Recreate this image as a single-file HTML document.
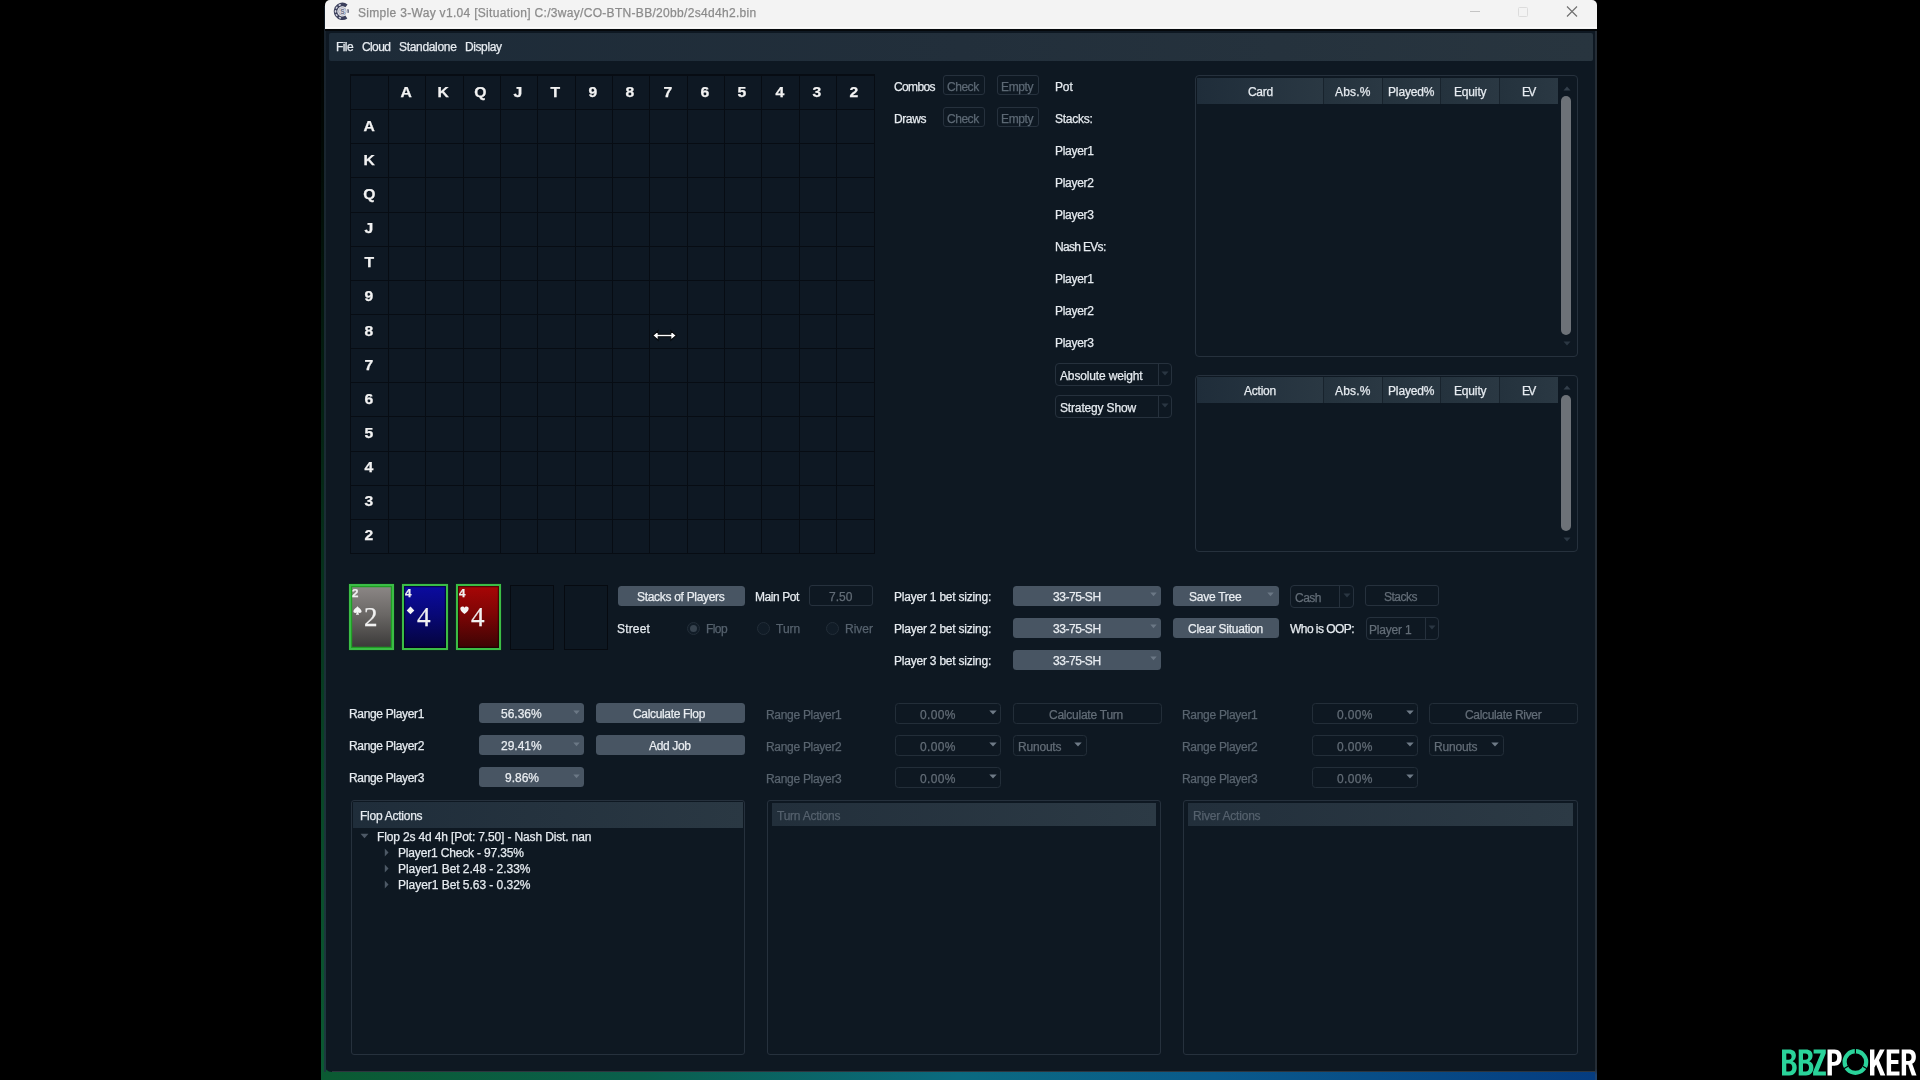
<!DOCTYPE html>
<html><head><meta charset="utf-8"><title>Simple 3-Way</title>
<style>
html,body{margin:0;padding:0;background:#000;}
body{width:1920px;height:1080px;position:relative;overflow:hidden;font-family:"Liberation Sans",sans-serif;font-size:12px;}
body div,body svg{position:absolute;}
.t{white-space:pre;-webkit-text-stroke:0.25px currentColor;will-change:transform;}
</style></head><body>
<div style="left:321px;top:0px;width:1276px;height:1080px;background:linear-gradient(90deg,#0b5a32 0%,#0a5f4c 25%,#0b6a80 50%,#0a5a8c 70%,#053c80 100%);"></div>
<div style="left:321px;top:0px;width:1276px;height:1080px;background:linear-gradient(180deg,rgba(0,0,0,1) 0%,rgba(0,0,0,.93) 12%,rgba(0,0,0,.55) 45%,rgba(0,0,0,.15) 80%,rgba(0,0,0,0) 100%);"></div>
<div style="left:324px;top:6px;width:1273px;height:1066.3px;background:#0e1822;border-radius:0 0 2px 8px;"></div>
<div style="left:323.8px;top:29px;width:2.6px;height:1043px;background:linear-gradient(180deg,#18222c,#1d3a3f);"></div>
<div style="left:1595px;top:29px;width:2px;height:1051px;background:linear-gradient(180deg,#252d36 0,#252d36 1040px,#1f4470 1046px);"></div>
<div style="left:332px;top:1071.3px;width:1263px;height:1.2px;background:rgba(255,255,255,.13);"></div>
<div style="left:325px;top:0px;width:1272px;height:28.5px;background:#f3f3f3;border-radius:5px 5px 0 0;"></div>
<div style="left:325px;top:27.3px;width:1272px;height:1.2px;background:#fbfbfb;"></div>
<div style="left:325px;top:28.5px;width:1272px;height:2px;background:#05080b;"></div>
<svg style="left:332.1px;top:1.1px" width="20.8" height="20.8" viewBox="-10 -10 20 20"><circle r="6.6" fill="none" stroke="#3c405c" stroke-width="3.4" stroke-dasharray="28.8 12.67" transform="rotate(55)"/><ellipse cx="-2.58" cy="-6.08" rx="1.25" ry="0.8" transform="rotate(337 -2.58 -6.08)" fill="#d4d6e2"/><ellipse cx="-5.54" cy="-3.59" rx="1.25" ry="0.8" transform="rotate(303 -5.54 -3.59)" fill="#d4d6e2"/><ellipse cx="-6.60" cy="0.00" rx="1.25" ry="0.8" transform="rotate(270 -6.60 0.00)" fill="#d4d6e2"/><ellipse cx="-5.54" cy="3.59" rx="1.25" ry="0.8" transform="rotate(237 -5.54 3.59)" fill="#d4d6e2"/><ellipse cx="-2.37" cy="6.16" rx="1.25" ry="0.8" transform="rotate(201 -2.37 6.16)" fill="#d4d6e2"/><path d="M5.200 -2.100A5.600 5.600 0 0 1 5.400 1.400" fill="none" stroke="#3c405c" stroke-width="1.100"/><circle r="3.7" fill="#dcdde5" stroke="#9a9db0" stroke-width="0.7"/><text x="0" y="2.3" font-size="6.4" font-weight="bold" fill="#6d7188" text-anchor="middle" font-family="Liberation Sans">S</text></svg>
<div class="t" style="left:357.50px;top:4.60px;height:16px;line-height:16px;font-size:12px;color:#8b8b8b;white-space:pre;letter-spacing:0.309px;">Simple 3-Way v1.04 [Situation] C:/3way/CO-BTN-BB/20bb/2s4d4h2.bin</div>
<svg style="left:1460px;top:0" width="130" height="26" viewBox="0 0 130 26"><path d="M10 11.5h10" stroke="#c4c4c4" stroke-width="1"/><rect x="58.5" y="7.5" width="9" height="9" rx="1" fill="none" stroke="#dcdcdc" stroke-width="1"/><path d="M107 6.5l10 10M117 6.5l-10 10" stroke="#6f6f6f" stroke-width="1.1"/></svg>
<div style="left:329px;top:32.5px;width:1264px;height:28px;background:linear-gradient(90deg,#1d2b38 0%,#222f3b 50%,#28353f 100%);border-radius:2px;"></div>
<div class="t" style="left:335.80px;top:38.60px;height:16px;line-height:16px;font-size:12px;color:#e6ebf0;white-space:pre;letter-spacing:-0.584px;">File</div>
<div class="t" style="left:361.70px;top:38.60px;height:16px;line-height:16px;font-size:12px;color:#e6ebf0;white-space:pre;letter-spacing:-0.611px;">Cloud</div>
<div class="t" style="left:398.70px;top:38.60px;height:16px;line-height:16px;font-size:12px;color:#e6ebf0;white-space:pre;letter-spacing:-0.322px;">Standalone</div>
<div class="t" style="left:464.70px;top:38.60px;height:16px;line-height:16px;font-size:12px;color:#e6ebf0;white-space:pre;letter-spacing:-0.407px;">Display</div>
<div style="left:349.5px;top:74px;width:525.0px;height:480.0px;background:#070c13;"></div><div style="left:351px;top:76px;width:37px;height:33px;background:#0e1823;"></div><div style="left:389px;top:76px;width:36px;height:33px;background:#0e1823;"></div><div style="left:426px;top:76px;width:37px;height:33px;background:#0e1823;"></div><div style="left:464px;top:76px;width:36px;height:33px;background:#0e1823;"></div><div style="left:501px;top:76px;width:36px;height:33px;background:#0e1823;"></div><div style="left:538px;top:76px;width:37px;height:33px;background:#0e1823;"></div><div style="left:576px;top:76px;width:36px;height:33px;background:#0e1823;"></div><div style="left:613px;top:76px;width:36px;height:33px;background:#0e1823;"></div><div style="left:650px;top:76px;width:37px;height:33px;background:#0e1823;"></div><div style="left:688px;top:76px;width:36px;height:33px;background:#0e1823;"></div><div style="left:725px;top:76px;width:36px;height:33px;background:#0e1823;"></div><div style="left:762px;top:76px;width:37px;height:33px;background:#0e1823;"></div><div style="left:800px;top:76px;width:36px;height:33px;background:#0e1823;"></div><div style="left:837px;top:76px;width:37px;height:33px;background:#0e1823;"></div><div style="left:351px;top:110px;width:37px;height:33px;background:#0e1823;"></div><div style="left:389px;top:110px;width:36px;height:33px;background:#0e1823;"></div><div style="left:426px;top:110px;width:37px;height:33px;background:#0e1823;"></div><div style="left:464px;top:110px;width:36px;height:33px;background:#0e1823;"></div><div style="left:501px;top:110px;width:36px;height:33px;background:#0e1823;"></div><div style="left:538px;top:110px;width:37px;height:33px;background:#0e1823;"></div><div style="left:576px;top:110px;width:36px;height:33px;background:#0e1823;"></div><div style="left:613px;top:110px;width:36px;height:33px;background:#0e1823;"></div><div style="left:650px;top:110px;width:37px;height:33px;background:#0e1823;"></div><div style="left:688px;top:110px;width:36px;height:33px;background:#0e1823;"></div><div style="left:725px;top:110px;width:36px;height:33px;background:#0e1823;"></div><div style="left:762px;top:110px;width:37px;height:33px;background:#0e1823;"></div><div style="left:800px;top:110px;width:36px;height:33px;background:#0e1823;"></div><div style="left:837px;top:110px;width:37px;height:33px;background:#0e1823;"></div><div style="left:351px;top:144px;width:37px;height:33px;background:#0e1823;"></div><div style="left:389px;top:144px;width:36px;height:33px;background:#0e1823;"></div><div style="left:426px;top:144px;width:37px;height:33px;background:#0e1823;"></div><div style="left:464px;top:144px;width:36px;height:33px;background:#0e1823;"></div><div style="left:501px;top:144px;width:36px;height:33px;background:#0e1823;"></div><div style="left:538px;top:144px;width:37px;height:33px;background:#0e1823;"></div><div style="left:576px;top:144px;width:36px;height:33px;background:#0e1823;"></div><div style="left:613px;top:144px;width:36px;height:33px;background:#0e1823;"></div><div style="left:650px;top:144px;width:37px;height:33px;background:#0e1823;"></div><div style="left:688px;top:144px;width:36px;height:33px;background:#0e1823;"></div><div style="left:725px;top:144px;width:36px;height:33px;background:#0e1823;"></div><div style="left:762px;top:144px;width:37px;height:33px;background:#0e1823;"></div><div style="left:800px;top:144px;width:36px;height:33px;background:#0e1823;"></div><div style="left:837px;top:144px;width:37px;height:33px;background:#0e1823;"></div><div style="left:351px;top:178px;width:37px;height:34px;background:#0e1823;"></div><div style="left:389px;top:178px;width:36px;height:34px;background:#0e1823;"></div><div style="left:426px;top:178px;width:37px;height:34px;background:#0e1823;"></div><div style="left:464px;top:178px;width:36px;height:34px;background:#0e1823;"></div><div style="left:501px;top:178px;width:36px;height:34px;background:#0e1823;"></div><div style="left:538px;top:178px;width:37px;height:34px;background:#0e1823;"></div><div style="left:576px;top:178px;width:36px;height:34px;background:#0e1823;"></div><div style="left:613px;top:178px;width:36px;height:34px;background:#0e1823;"></div><div style="left:650px;top:178px;width:37px;height:34px;background:#0e1823;"></div><div style="left:688px;top:178px;width:36px;height:34px;background:#0e1823;"></div><div style="left:725px;top:178px;width:36px;height:34px;background:#0e1823;"></div><div style="left:762px;top:178px;width:37px;height:34px;background:#0e1823;"></div><div style="left:800px;top:178px;width:36px;height:34px;background:#0e1823;"></div><div style="left:837px;top:178px;width:37px;height:34px;background:#0e1823;"></div><div style="left:351px;top:213px;width:37px;height:33px;background:#0e1823;"></div><div style="left:389px;top:213px;width:36px;height:33px;background:#0e1823;"></div><div style="left:426px;top:213px;width:37px;height:33px;background:#0e1823;"></div><div style="left:464px;top:213px;width:36px;height:33px;background:#0e1823;"></div><div style="left:501px;top:213px;width:36px;height:33px;background:#0e1823;"></div><div style="left:538px;top:213px;width:37px;height:33px;background:#0e1823;"></div><div style="left:576px;top:213px;width:36px;height:33px;background:#0e1823;"></div><div style="left:613px;top:213px;width:36px;height:33px;background:#0e1823;"></div><div style="left:650px;top:213px;width:37px;height:33px;background:#0e1823;"></div><div style="left:688px;top:213px;width:36px;height:33px;background:#0e1823;"></div><div style="left:725px;top:213px;width:36px;height:33px;background:#0e1823;"></div><div style="left:762px;top:213px;width:37px;height:33px;background:#0e1823;"></div><div style="left:800px;top:213px;width:36px;height:33px;background:#0e1823;"></div><div style="left:837px;top:213px;width:37px;height:33px;background:#0e1823;"></div><div style="left:351px;top:247px;width:37px;height:33px;background:#0e1823;"></div><div style="left:389px;top:247px;width:36px;height:33px;background:#0e1823;"></div><div style="left:426px;top:247px;width:37px;height:33px;background:#0e1823;"></div><div style="left:464px;top:247px;width:36px;height:33px;background:#0e1823;"></div><div style="left:501px;top:247px;width:36px;height:33px;background:#0e1823;"></div><div style="left:538px;top:247px;width:37px;height:33px;background:#0e1823;"></div><div style="left:576px;top:247px;width:36px;height:33px;background:#0e1823;"></div><div style="left:613px;top:247px;width:36px;height:33px;background:#0e1823;"></div><div style="left:650px;top:247px;width:37px;height:33px;background:#0e1823;"></div><div style="left:688px;top:247px;width:36px;height:33px;background:#0e1823;"></div><div style="left:725px;top:247px;width:36px;height:33px;background:#0e1823;"></div><div style="left:762px;top:247px;width:37px;height:33px;background:#0e1823;"></div><div style="left:800px;top:247px;width:36px;height:33px;background:#0e1823;"></div><div style="left:837px;top:247px;width:37px;height:33px;background:#0e1823;"></div><div style="left:351px;top:281px;width:37px;height:33px;background:#0e1823;"></div><div style="left:389px;top:281px;width:36px;height:33px;background:#0e1823;"></div><div style="left:426px;top:281px;width:37px;height:33px;background:#0e1823;"></div><div style="left:464px;top:281px;width:36px;height:33px;background:#0e1823;"></div><div style="left:501px;top:281px;width:36px;height:33px;background:#0e1823;"></div><div style="left:538px;top:281px;width:37px;height:33px;background:#0e1823;"></div><div style="left:576px;top:281px;width:36px;height:33px;background:#0e1823;"></div><div style="left:613px;top:281px;width:36px;height:33px;background:#0e1823;"></div><div style="left:650px;top:281px;width:37px;height:33px;background:#0e1823;"></div><div style="left:688px;top:281px;width:36px;height:33px;background:#0e1823;"></div><div style="left:725px;top:281px;width:36px;height:33px;background:#0e1823;"></div><div style="left:762px;top:281px;width:37px;height:33px;background:#0e1823;"></div><div style="left:800px;top:281px;width:36px;height:33px;background:#0e1823;"></div><div style="left:837px;top:281px;width:37px;height:33px;background:#0e1823;"></div><div style="left:351px;top:315px;width:37px;height:33px;background:#0e1823;"></div><div style="left:389px;top:315px;width:36px;height:33px;background:#0e1823;"></div><div style="left:426px;top:315px;width:37px;height:33px;background:#0e1823;"></div><div style="left:464px;top:315px;width:36px;height:33px;background:#0e1823;"></div><div style="left:501px;top:315px;width:36px;height:33px;background:#0e1823;"></div><div style="left:538px;top:315px;width:37px;height:33px;background:#0e1823;"></div><div style="left:576px;top:315px;width:36px;height:33px;background:#0e1823;"></div><div style="left:613px;top:315px;width:36px;height:33px;background:#0e1823;"></div><div style="left:650px;top:315px;width:37px;height:33px;background:#0e1823;"></div><div style="left:688px;top:315px;width:36px;height:33px;background:#0e1823;"></div><div style="left:725px;top:315px;width:36px;height:33px;background:#0e1823;"></div><div style="left:762px;top:315px;width:37px;height:33px;background:#0e1823;"></div><div style="left:800px;top:315px;width:36px;height:33px;background:#0e1823;"></div><div style="left:837px;top:315px;width:37px;height:33px;background:#0e1823;"></div><div style="left:351px;top:349px;width:37px;height:33px;background:#0e1823;"></div><div style="left:389px;top:349px;width:36px;height:33px;background:#0e1823;"></div><div style="left:426px;top:349px;width:37px;height:33px;background:#0e1823;"></div><div style="left:464px;top:349px;width:36px;height:33px;background:#0e1823;"></div><div style="left:501px;top:349px;width:36px;height:33px;background:#0e1823;"></div><div style="left:538px;top:349px;width:37px;height:33px;background:#0e1823;"></div><div style="left:576px;top:349px;width:36px;height:33px;background:#0e1823;"></div><div style="left:613px;top:349px;width:36px;height:33px;background:#0e1823;"></div><div style="left:650px;top:349px;width:37px;height:33px;background:#0e1823;"></div><div style="left:688px;top:349px;width:36px;height:33px;background:#0e1823;"></div><div style="left:725px;top:349px;width:36px;height:33px;background:#0e1823;"></div><div style="left:762px;top:349px;width:37px;height:33px;background:#0e1823;"></div><div style="left:800px;top:349px;width:36px;height:33px;background:#0e1823;"></div><div style="left:837px;top:349px;width:37px;height:33px;background:#0e1823;"></div><div style="left:351px;top:383px;width:37px;height:33px;background:#0e1823;"></div><div style="left:389px;top:383px;width:36px;height:33px;background:#0e1823;"></div><div style="left:426px;top:383px;width:37px;height:33px;background:#0e1823;"></div><div style="left:464px;top:383px;width:36px;height:33px;background:#0e1823;"></div><div style="left:501px;top:383px;width:36px;height:33px;background:#0e1823;"></div><div style="left:538px;top:383px;width:37px;height:33px;background:#0e1823;"></div><div style="left:576px;top:383px;width:36px;height:33px;background:#0e1823;"></div><div style="left:613px;top:383px;width:36px;height:33px;background:#0e1823;"></div><div style="left:650px;top:383px;width:37px;height:33px;background:#0e1823;"></div><div style="left:688px;top:383px;width:36px;height:33px;background:#0e1823;"></div><div style="left:725px;top:383px;width:36px;height:33px;background:#0e1823;"></div><div style="left:762px;top:383px;width:37px;height:33px;background:#0e1823;"></div><div style="left:800px;top:383px;width:36px;height:33px;background:#0e1823;"></div><div style="left:837px;top:383px;width:37px;height:33px;background:#0e1823;"></div><div style="left:351px;top:417px;width:37px;height:34px;background:#0e1823;"></div><div style="left:389px;top:417px;width:36px;height:34px;background:#0e1823;"></div><div style="left:426px;top:417px;width:37px;height:34px;background:#0e1823;"></div><div style="left:464px;top:417px;width:36px;height:34px;background:#0e1823;"></div><div style="left:501px;top:417px;width:36px;height:34px;background:#0e1823;"></div><div style="left:538px;top:417px;width:37px;height:34px;background:#0e1823;"></div><div style="left:576px;top:417px;width:36px;height:34px;background:#0e1823;"></div><div style="left:613px;top:417px;width:36px;height:34px;background:#0e1823;"></div><div style="left:650px;top:417px;width:37px;height:34px;background:#0e1823;"></div><div style="left:688px;top:417px;width:36px;height:34px;background:#0e1823;"></div><div style="left:725px;top:417px;width:36px;height:34px;background:#0e1823;"></div><div style="left:762px;top:417px;width:37px;height:34px;background:#0e1823;"></div><div style="left:800px;top:417px;width:36px;height:34px;background:#0e1823;"></div><div style="left:837px;top:417px;width:37px;height:34px;background:#0e1823;"></div><div style="left:351px;top:452px;width:37px;height:33px;background:#0e1823;"></div><div style="left:389px;top:452px;width:36px;height:33px;background:#0e1823;"></div><div style="left:426px;top:452px;width:37px;height:33px;background:#0e1823;"></div><div style="left:464px;top:452px;width:36px;height:33px;background:#0e1823;"></div><div style="left:501px;top:452px;width:36px;height:33px;background:#0e1823;"></div><div style="left:538px;top:452px;width:37px;height:33px;background:#0e1823;"></div><div style="left:576px;top:452px;width:36px;height:33px;background:#0e1823;"></div><div style="left:613px;top:452px;width:36px;height:33px;background:#0e1823;"></div><div style="left:650px;top:452px;width:37px;height:33px;background:#0e1823;"></div><div style="left:688px;top:452px;width:36px;height:33px;background:#0e1823;"></div><div style="left:725px;top:452px;width:36px;height:33px;background:#0e1823;"></div><div style="left:762px;top:452px;width:37px;height:33px;background:#0e1823;"></div><div style="left:800px;top:452px;width:36px;height:33px;background:#0e1823;"></div><div style="left:837px;top:452px;width:37px;height:33px;background:#0e1823;"></div><div style="left:351px;top:486px;width:37px;height:33px;background:#0e1823;"></div><div style="left:389px;top:486px;width:36px;height:33px;background:#0e1823;"></div><div style="left:426px;top:486px;width:37px;height:33px;background:#0e1823;"></div><div style="left:464px;top:486px;width:36px;height:33px;background:#0e1823;"></div><div style="left:501px;top:486px;width:36px;height:33px;background:#0e1823;"></div><div style="left:538px;top:486px;width:37px;height:33px;background:#0e1823;"></div><div style="left:576px;top:486px;width:36px;height:33px;background:#0e1823;"></div><div style="left:613px;top:486px;width:36px;height:33px;background:#0e1823;"></div><div style="left:650px;top:486px;width:37px;height:33px;background:#0e1823;"></div><div style="left:688px;top:486px;width:36px;height:33px;background:#0e1823;"></div><div style="left:725px;top:486px;width:36px;height:33px;background:#0e1823;"></div><div style="left:762px;top:486px;width:37px;height:33px;background:#0e1823;"></div><div style="left:800px;top:486px;width:36px;height:33px;background:#0e1823;"></div><div style="left:837px;top:486px;width:37px;height:33px;background:#0e1823;"></div><div style="left:351px;top:520px;width:37px;height:33px;background:#0e1823;"></div><div style="left:389px;top:520px;width:36px;height:33px;background:#0e1823;"></div><div style="left:426px;top:520px;width:37px;height:33px;background:#0e1823;"></div><div style="left:464px;top:520px;width:36px;height:33px;background:#0e1823;"></div><div style="left:501px;top:520px;width:36px;height:33px;background:#0e1823;"></div><div style="left:538px;top:520px;width:37px;height:33px;background:#0e1823;"></div><div style="left:576px;top:520px;width:36px;height:33px;background:#0e1823;"></div><div style="left:613px;top:520px;width:36px;height:33px;background:#0e1823;"></div><div style="left:650px;top:520px;width:37px;height:33px;background:#0e1823;"></div><div style="left:688px;top:520px;width:36px;height:33px;background:#0e1823;"></div><div style="left:725px;top:520px;width:36px;height:33px;background:#0e1823;"></div><div style="left:762px;top:520px;width:37px;height:33px;background:#0e1823;"></div><div style="left:800px;top:520px;width:36px;height:33px;background:#0e1823;"></div><div style="left:837px;top:520px;width:37px;height:33px;background:#0e1823;"></div>
<div class="t" style="left:400.88px;top:83.47px;height:18px;line-height:18px;font-size:14px;color:#f2f2f2;white-space:pre;font-weight:bold;transform:scaleX(1.12);">A</div>
<div class="t" style="left:364.22px;top:116.71px;height:18px;line-height:18px;font-size:14px;color:#f2f2f2;white-space:pre;font-weight:bold;transform:scaleX(1.12);">A</div>
<div class="t" style="left:438.24px;top:83.47px;height:18px;line-height:18px;font-size:14px;color:#f2f2f2;white-space:pre;font-weight:bold;transform:scaleX(1.12);">K</div>
<div class="t" style="left:364.22px;top:150.85px;height:18px;line-height:18px;font-size:14px;color:#f2f2f2;white-space:pre;font-weight:bold;transform:scaleX(1.12);">K</div>
<div class="t" style="left:475.22px;top:83.47px;height:18px;line-height:18px;font-size:14px;color:#f2f2f2;white-space:pre;font-weight:bold;transform:scaleX(1.12);">Q</div>
<div class="t" style="left:363.84px;top:184.99px;height:18px;line-height:18px;font-size:14px;color:#f2f2f2;white-space:pre;font-weight:bold;transform:scaleX(1.12);">Q</div>
<div class="t" style="left:514.13px;top:83.47px;height:18px;line-height:18px;font-size:14px;color:#f2f2f2;white-space:pre;font-weight:bold;transform:scaleX(1.12);">J</div>
<div class="t" style="left:365.39px;top:219.13px;height:18px;line-height:18px;font-size:14px;color:#f2f2f2;white-space:pre;font-weight:bold;transform:scaleX(1.12);">J</div>
<div class="t" style="left:551.10px;top:83.47px;height:18px;line-height:18px;font-size:14px;color:#f2f2f2;white-space:pre;font-weight:bold;transform:scaleX(1.12);">T</div>
<div class="t" style="left:365.00px;top:253.27px;height:18px;line-height:18px;font-size:14px;color:#f2f2f2;white-space:pre;font-weight:bold;transform:scaleX(1.12);">T</div>
<div class="t" style="left:588.85px;top:83.47px;height:18px;line-height:18px;font-size:14px;color:#f2f2f2;white-space:pre;font-weight:bold;transform:scaleX(1.12);">9</div>
<div class="t" style="left:365.39px;top:287.41px;height:18px;line-height:18px;font-size:14px;color:#f2f2f2;white-space:pre;font-weight:bold;transform:scaleX(1.12);">9</div>
<div class="t" style="left:626.21px;top:83.47px;height:18px;line-height:18px;font-size:14px;color:#f2f2f2;white-space:pre;font-weight:bold;transform:scaleX(1.12);">8</div>
<div class="t" style="left:365.39px;top:321.55px;height:18px;line-height:18px;font-size:14px;color:#f2f2f2;white-space:pre;font-weight:bold;transform:scaleX(1.12);">8</div>
<div class="t" style="left:663.57px;top:83.47px;height:18px;line-height:18px;font-size:14px;color:#f2f2f2;white-space:pre;font-weight:bold;transform:scaleX(1.12);">7</div>
<div class="t" style="left:365.39px;top:355.69px;height:18px;line-height:18px;font-size:14px;color:#f2f2f2;white-space:pre;font-weight:bold;transform:scaleX(1.12);">7</div>
<div class="t" style="left:700.93px;top:83.47px;height:18px;line-height:18px;font-size:14px;color:#f2f2f2;white-space:pre;font-weight:bold;transform:scaleX(1.12);">6</div>
<div class="t" style="left:365.39px;top:389.83px;height:18px;line-height:18px;font-size:14px;color:#f2f2f2;white-space:pre;font-weight:bold;transform:scaleX(1.12);">6</div>
<div class="t" style="left:738.29px;top:83.47px;height:18px;line-height:18px;font-size:14px;color:#f2f2f2;white-space:pre;font-weight:bold;transform:scaleX(1.12);">5</div>
<div class="t" style="left:365.39px;top:423.97px;height:18px;line-height:18px;font-size:14px;color:#f2f2f2;white-space:pre;font-weight:bold;transform:scaleX(1.12);">5</div>
<div class="t" style="left:775.65px;top:83.47px;height:18px;line-height:18px;font-size:14px;color:#f2f2f2;white-space:pre;font-weight:bold;transform:scaleX(1.12);">4</div>
<div class="t" style="left:365.39px;top:458.11px;height:18px;line-height:18px;font-size:14px;color:#f2f2f2;white-space:pre;font-weight:bold;transform:scaleX(1.12);">4</div>
<div class="t" style="left:813.01px;top:83.47px;height:18px;line-height:18px;font-size:14px;color:#f2f2f2;white-space:pre;font-weight:bold;transform:scaleX(1.12);">3</div>
<div class="t" style="left:365.39px;top:492.25px;height:18px;line-height:18px;font-size:14px;color:#f2f2f2;white-space:pre;font-weight:bold;transform:scaleX(1.12);">3</div>
<div class="t" style="left:850.37px;top:83.47px;height:18px;line-height:18px;font-size:14px;color:#f2f2f2;white-space:pre;font-weight:bold;transform:scaleX(1.12);">2</div>
<div class="t" style="left:365.39px;top:526.39px;height:18px;line-height:18px;font-size:14px;color:#f2f2f2;white-space:pre;font-weight:bold;transform:scaleX(1.12);">2</div>
<svg style="left:650px;top:327px" width="30" height="16" viewBox="0 0 30 16"><path d="M2.700 8.500l5.500-4.700v3.500h12.600v-3.500l5.500 4.700-5.500 4.700v-3.500h-12.600v3.500z" fill="#fff" stroke="#05080c" stroke-width="1.100" stroke-linejoin="miter"/></svg>
<div class="t" style="left:894.20px;top:78.50px;height:16px;line-height:16px;font-size:12px;color:#e6ebf0;white-space:pre;letter-spacing:-0.647px;">Combos</div>
<div class="t" style="left:894.20px;top:110.50px;height:16px;line-height:16px;font-size:12px;color:#e6ebf0;white-space:pre;letter-spacing:-0.400px;">Draws</div>
<div style="left:943.3px;top:74.7px;width:42px;height:20.8px;border:1px solid #26313d;border-radius:3px;box-sizing:border-box;"></div>
<div class="t" style="left:947.45px;top:78.70px;height:16px;line-height:16px;font-size:12px;color:#5c6874;white-space:pre;letter-spacing:-0.463px;">Check</div>
<div style="left:996.7px;top:74.7px;width:42px;height:20.8px;border:1px solid #26313d;border-radius:3px;box-sizing:border-box;"></div>
<div class="t" style="left:1000.60px;top:78.70px;height:16px;line-height:16px;font-size:12px;color:#5c6874;white-space:pre;letter-spacing:-0.362px;">Empty</div>
<div style="left:943.3px;top:106.7px;width:42px;height:20.8px;border:1px solid #26313d;border-radius:3px;box-sizing:border-box;"></div>
<div class="t" style="left:947.45px;top:110.70px;height:16px;line-height:16px;font-size:12px;color:#5c6874;white-space:pre;letter-spacing:-0.463px;">Check</div>
<div style="left:996.7px;top:106.7px;width:42px;height:20.8px;border:1px solid #26313d;border-radius:3px;box-sizing:border-box;"></div>
<div class="t" style="left:1000.60px;top:110.70px;height:16px;line-height:16px;font-size:12px;color:#5c6874;white-space:pre;letter-spacing:-0.362px;">Empty</div>
<div class="t" style="left:1054.50px;top:78.60px;height:16px;line-height:16px;font-size:12px;color:#e6ebf0;white-space:pre;letter-spacing:-0.137px;">Pot</div>
<div class="t" style="left:1054.50px;top:110.60px;height:16px;line-height:16px;font-size:12px;color:#e6ebf0;white-space:pre;letter-spacing:-0.264px;">Stacks:</div>
<div class="t" style="left:1054.50px;top:142.60px;height:16px;line-height:16px;font-size:12px;color:#e6ebf0;white-space:pre;letter-spacing:-0.298px;">Player1</div>
<div class="t" style="left:1054.50px;top:174.60px;height:16px;line-height:16px;font-size:12px;color:#e6ebf0;white-space:pre;letter-spacing:-0.298px;">Player2</div>
<div class="t" style="left:1054.50px;top:206.60px;height:16px;line-height:16px;font-size:12px;color:#e6ebf0;white-space:pre;letter-spacing:-0.298px;">Player3</div>
<div class="t" style="left:1054.50px;top:238.60px;height:16px;line-height:16px;font-size:12px;color:#e6ebf0;white-space:pre;letter-spacing:-0.677px;">Nash EVs:</div>
<div class="t" style="left:1054.50px;top:270.60px;height:16px;line-height:16px;font-size:12px;color:#e6ebf0;white-space:pre;letter-spacing:-0.298px;">Player1</div>
<div class="t" style="left:1054.50px;top:302.60px;height:16px;line-height:16px;font-size:12px;color:#e6ebf0;white-space:pre;letter-spacing:-0.298px;">Player2</div>
<div class="t" style="left:1054.50px;top:334.60px;height:16px;line-height:16px;font-size:12px;color:#e6ebf0;white-space:pre;letter-spacing:-0.298px;">Player3</div>
<div style="left:1055.3px;top:363px;width:117.2px;height:22.8px;border:1px solid #26313d;border-radius:4px;box-sizing:border-box;"></div>
<div style="left:1157.7px;top:364px;width:1px;height:20.8px;background:#26313d;"></div>
<div class="t" style="left:1060.30px;top:368.00px;height:16px;line-height:16px;font-size:12px;color:#e6ebf0;white-space:pre;letter-spacing:-0.148px;">Absolute weight</div>
<svg style="left:1161.1px;top:370.9px" width="8" height="5" viewBox="0 0 8 5"><path d="M0.5 0.5h7L4 4.5z" fill="#2a3642"/></svg>
<div style="left:1055.3px;top:395px;width:117.2px;height:22.8px;border:1px solid #26313d;border-radius:4px;box-sizing:border-box;"></div>
<div style="left:1157.7px;top:396px;width:1px;height:20.8px;background:#26313d;"></div>
<div class="t" style="left:1060.30px;top:400.00px;height:16px;line-height:16px;font-size:12px;color:#e6ebf0;white-space:pre;letter-spacing:-0.157px;">Strategy Show</div>
<svg style="left:1161.1px;top:402.9px" width="8" height="5" viewBox="0 0 8 5"><path d="M0.5 0.5h7L4 4.5z" fill="#2a3642"/></svg>
<div style="left:1194.7px;top:74.8px;width:383.3px;height:282px;border:1px solid #26313d;border-radius:4px;box-sizing:border-box;"></div>
<div style="left:1197px;top:77.5px;width:361.4px;height:26.3px;background:#26343f;"></div>
<div style="left:1197px;top:77.5px;width:126.3px;height:26.3px;background:linear-gradient(90deg,#1f2d3a,#2a3843);"></div>
<div class="t" style="left:1247.85px;top:83.55px;height:16px;line-height:16px;font-size:12px;color:#e6ebf0;white-space:pre;letter-spacing:-0.303px;">Card</div>
<div style="left:1323.3px;top:77.5px;width:58.7px;height:26.3px;background:linear-gradient(90deg,#24323d,#2a3843);"></div>
<div style="left:1322.8px;top:77.5px;width:1px;height:26.3px;background:#18232d;"></div>
<div class="t" style="left:1334.95px;top:83.55px;height:16px;line-height:16px;font-size:12px;color:#e6ebf0;white-space:pre;letter-spacing:0.184px;">Abs.%</div>
<div style="left:1382px;top:77.5px;width:58.3px;height:26.3px;background:linear-gradient(90deg,#24323d,#2a3843);"></div>
<div style="left:1381.5px;top:77.5px;width:1px;height:26.3px;background:#18232d;"></div>
<div class="t" style="left:1388.05px;top:83.55px;height:16px;line-height:16px;font-size:12px;color:#e6ebf0;white-space:pre;letter-spacing:-0.137px;">Played%</div>
<div style="left:1440.3px;top:77.5px;width:59.1px;height:26.3px;background:linear-gradient(90deg,#24323d,#2a3843);"></div>
<div style="left:1439.8px;top:77.5px;width:1px;height:26.3px;background:#18232d;"></div>
<div class="t" style="left:1453.75px;top:83.55px;height:16px;line-height:16px;font-size:12px;color:#e6ebf0;white-space:pre;letter-spacing:-0.159px;">Equity</div>
<div style="left:1499.4px;top:77.5px;width:59px;height:26.3px;background:linear-gradient(90deg,#24323d,#2a3843);"></div>
<div style="left:1498.9px;top:77.5px;width:1px;height:26.3px;background:#18232d;"></div>
<div class="t" style="left:1522.20px;top:83.55px;height:16px;line-height:16px;font-size:12px;color:#e6ebf0;white-space:pre;letter-spacing:-1.704px;">EV</div>
<div style="left:1561.4px;top:96px;width:10px;height:239px;background:#6d7278;border-radius:5px;"></div>
<svg style="left:1562.5px;top:86.0px" width="8" height="5" viewBox="0 0 8 5"><path d="M0.5 4.5h7L4 0.5z" fill="#333f4b"/></svg>
<svg style="left:1562.5px;top:341.0px" width="8" height="5" viewBox="0 0 8 5"><path d="M0.5 0.5h7L4 4.5z" fill="#2b3743"/></svg>
<div style="left:1194.7px;top:374.7px;width:383.3px;height:177.5px;border:1px solid #26313d;border-radius:4px;box-sizing:border-box;"></div>
<div style="left:1197px;top:376.7px;width:361.4px;height:26.3px;background:#26343f;"></div>
<div style="left:1197px;top:376.7px;width:126.3px;height:26.3px;background:linear-gradient(90deg,#1f2d3a,#2a3843);"></div>
<div class="t" style="left:1244.25px;top:383.45px;height:16px;line-height:16px;font-size:12px;color:#e6ebf0;white-space:pre;letter-spacing:-0.225px;">Action</div>
<div style="left:1323.3px;top:376.7px;width:58.7px;height:26.3px;background:linear-gradient(90deg,#24323d,#2a3843);"></div>
<div style="left:1322.8px;top:376.7px;width:1px;height:26.3px;background:#18232d;"></div>
<div class="t" style="left:1334.95px;top:383.45px;height:16px;line-height:16px;font-size:12px;color:#e6ebf0;white-space:pre;letter-spacing:0.184px;">Abs.%</div>
<div style="left:1382px;top:376.7px;width:58.3px;height:26.3px;background:linear-gradient(90deg,#24323d,#2a3843);"></div>
<div style="left:1381.5px;top:376.7px;width:1px;height:26.3px;background:#18232d;"></div>
<div class="t" style="left:1388.05px;top:383.45px;height:16px;line-height:16px;font-size:12px;color:#e6ebf0;white-space:pre;letter-spacing:-0.137px;">Played%</div>
<div style="left:1440.3px;top:376.7px;width:59.1px;height:26.3px;background:linear-gradient(90deg,#24323d,#2a3843);"></div>
<div style="left:1439.8px;top:376.7px;width:1px;height:26.3px;background:#18232d;"></div>
<div class="t" style="left:1453.75px;top:383.45px;height:16px;line-height:16px;font-size:12px;color:#e6ebf0;white-space:pre;letter-spacing:-0.159px;">Equity</div>
<div style="left:1499.4px;top:376.7px;width:59px;height:26.3px;background:linear-gradient(90deg,#24323d,#2a3843);"></div>
<div style="left:1498.9px;top:376.7px;width:1px;height:26.3px;background:#18232d;"></div>
<div class="t" style="left:1522.20px;top:383.45px;height:16px;line-height:16px;font-size:12px;color:#e6ebf0;white-space:pre;letter-spacing:-1.704px;">EV</div>
<div style="left:1561.4px;top:394.6px;width:10px;height:136px;background:#6d7278;border-radius:5px;"></div>
<svg style="left:1562.5px;top:384.6px" width="8" height="5" viewBox="0 0 8 5"><path d="M0.5 4.5h7L4 0.5z" fill="#333f4b"/></svg>
<svg style="left:1562.5px;top:536.6px" width="8" height="5" viewBox="0 0 8 5"><path d="M0.5 0.5h7L4 4.5z" fill="#2b3743"/></svg>
<div style="left:348.8px;top:583.5px;width:45.5px;height:66.7px;background:linear-gradient(180deg,#8c8786 0%,#6b6866 45%,#3a3938 100%);border:2.6px solid #3bbd46;box-sizing:border-box;box-shadow:inset 0 0 0 1.2px #1f9e24, 0 0 1.5px rgba(20,90,25,.8);"></div>
<div class="t" style="left:352.00px;top:586.35px;height:15.5px;line-height:15.5px;font-size:11.5px;color:#f0f0f0;white-space:pre;font-weight:bold;">2</div>
<div class="t" style="left:363.80px;top:601.80px;height:31px;line-height:31px;font-size:27px;color:#f1f1f1;white-space:pre;font-family:'Liberation Serif',serif;">2</div>
<svg style="left:353.2px;top:605.5px" width="9" height="9.2" viewBox="0 0 9 10" preserveAspectRatio="none"><path d="M4.5 0.3C5.5 2 8.6 3.6 8.6 5.8c0 1.6-1.9 2.3-3.4 1.2l.9 2.6H2.9l.9-2.6C2.3 8.100 .4 7.4.4 5.8.4 3.600 3.500 2 4.500 .3z" fill="#f4f4f4"/></svg>
<div style="left:402px;top:583.5px;width:45.9px;height:66.7px;background:linear-gradient(180deg,#0b0ba0 0%,#080878 45%,#04043c 100%);border:2.6px solid #3bbd46;box-sizing:border-box;box-shadow:inset 0 0 0 1.2px rgba(0,0,0,.5), 0 0 1.5px rgba(20,90,25,.8);"></div>
<div class="t" style="left:405.20px;top:586.35px;height:15.5px;line-height:15.5px;font-size:11.5px;color:#f0f0f0;white-space:pre;font-weight:bold;">4</div>
<div class="t" style="left:417.20px;top:601.80px;height:31px;line-height:31px;font-size:27px;color:#f1f1f1;white-space:pre;font-family:'Liberation Serif',serif;">4</div>
<svg style="left:406.4px;top:605.5px" width="9" height="9.2" viewBox="0 0 9 10" preserveAspectRatio="none"><path d="M4.5 0.6L8.3 4.800 4.500 9 .7 4.800z" fill="#f4f4f4"/></svg>
<div style="left:456px;top:583.5px;width:45px;height:66.7px;background:linear-gradient(180deg,#a80606 0%,#7e0505 45%,#3c0404 100%);border:2.6px solid #3bbd46;box-sizing:border-box;box-shadow:inset 0 0 0 1.2px rgba(0,0,0,.5), 0 0 1.5px rgba(20,90,25,.8);"></div>
<div class="t" style="left:459.20px;top:586.35px;height:15.5px;line-height:15.5px;font-size:11.5px;color:#f0f0f0;white-space:pre;font-weight:bold;">4</div>
<div class="t" style="left:470.75px;top:601.80px;height:31px;line-height:31px;font-size:27px;color:#f1f1f1;white-space:pre;font-family:'Liberation Serif',serif;">4</div>
<svg style="left:460.4px;top:605.5px" width="9" height="9.2" viewBox="0 0 9 10" preserveAspectRatio="none"><path d="M4.5 8.8C3 7.2.3 5.300 .3 3 .3 1.500 1.400 .6 2.500 .6c.9 0 1.600 .5 2 1.300C4.900 1.100 5.600 .6 6.500 .6 7.600 .6 8.700 1.500 8.700 3c0 2.300-2.700 4.200-4.200 5.800z" fill="#f4f4f4"/></svg>
<div style="left:510.2px;top:584.8px;width:43.8px;height:65.2px;border:1.5px solid #060a10;box-sizing:border-box;background:#0d1721;"></div>
<div style="left:564.2px;top:584.8px;width:43.8px;height:65.2px;border:1.5px solid #060a10;box-sizing:border-box;background:#0d1721;"></div>
<div style="left:617.5px;top:585.6px;width:127px;height:20px;background:#485563;border-radius:3.5px;"></div>
<div class="t" style="left:637.25px;top:589.10px;height:16px;line-height:16px;font-size:12px;color:#e9edf1;white-space:pre;letter-spacing:-0.306px;">Stacks of Players</div>
<div class="t" style="left:754.80px;top:589.00px;height:16px;line-height:16px;font-size:12px;color:#e6ebf0;white-space:pre;letter-spacing:-0.419px;">Main Pot</div>
<div style="left:809.4px;top:585.2px;width:63.2px;height:20.6px;border:1px solid #26313d;border-radius:3px;box-sizing:border-box;"></div>
<div class="t" style="left:829.32px;top:589.00px;height:16px;line-height:16px;font-size:12px;color:#636d77;white-space:pre;">7.50</div>
<div class="t" style="left:616.90px;top:621.00px;height:16px;line-height:16px;font-size:12px;color:#e6ebf0;white-space:pre;letter-spacing:0.164px;">Street</div>
<div style="left:686.9px;top:621.6px;width:13px;height:13px;border:1px solid #222d38;border-radius:50%;box-sizing:border-box;background:#111c27;"></div>
<div style="left:689.9px;top:624.6px;width:7px;height:7px;background:#37434f;border-radius:50%;"></div>
<div class="t" style="left:706.25px;top:621.00px;height:16px;line-height:16px;font-size:12px;color:#56626e;white-space:pre;letter-spacing:-0.586px;">Flop</div>
<div style="left:756.5px;top:621.6px;width:13px;height:13px;border:1px solid #222d38;border-radius:50%;box-sizing:border-box;background:#111c27;"></div>
<div class="t" style="left:775.80px;top:621.00px;height:16px;line-height:16px;font-size:12px;color:#56626e;white-space:pre;">Turn</div>
<div style="left:825.8px;top:621.6px;width:13px;height:13px;border:1px solid #222d38;border-radius:50%;box-sizing:border-box;background:#111c27;"></div>
<div class="t" style="left:845.00px;top:621.00px;height:16px;line-height:16px;font-size:12px;color:#56626e;white-space:pre;">River</div>
<div class="t" style="left:893.75px;top:588.90px;height:16px;line-height:16px;font-size:12px;color:#e6ebf0;white-space:pre;letter-spacing:-0.219px;">Player 1 bet sizing:</div>
<div style="left:1012.8px;top:585.6px;width:148.5px;height:20px;background:#485563;border-radius:3.5px;"></div>
<div class="t" style="left:1053.10px;top:589.10px;height:16px;line-height:16px;font-size:12px;color:#e9edf1;white-space:pre;letter-spacing:-0.470px;">33-75-SH</div>
<svg style="left:1149.5px;top:592.1px" width="7" height="5" viewBox="0 0 7 5"><path d="M0.300 .5h6.4L3.500 4.300z" fill="#6b7885"/></svg>
<div class="t" style="left:893.75px;top:620.90px;height:16px;line-height:16px;font-size:12px;color:#e6ebf0;white-space:pre;letter-spacing:-0.219px;">Player 2 bet sizing:</div>
<div style="left:1012.8px;top:617.6px;width:148.5px;height:20px;background:#485563;border-radius:3.5px;"></div>
<div class="t" style="left:1053.10px;top:621.10px;height:16px;line-height:16px;font-size:12px;color:#e9edf1;white-space:pre;letter-spacing:-0.470px;">33-75-SH</div>
<svg style="left:1149.5px;top:624.1px" width="7" height="5" viewBox="0 0 7 5"><path d="M0.300 .5h6.4L3.500 4.300z" fill="#6b7885"/></svg>
<div class="t" style="left:893.75px;top:652.90px;height:16px;line-height:16px;font-size:12px;color:#e6ebf0;white-space:pre;letter-spacing:-0.219px;">Player 3 bet sizing:</div>
<div style="left:1012.8px;top:649.6px;width:148.5px;height:20px;background:#485563;border-radius:3.5px;"></div>
<div class="t" style="left:1053.10px;top:653.10px;height:16px;line-height:16px;font-size:12px;color:#e9edf1;white-space:pre;letter-spacing:-0.470px;">33-75-SH</div>
<svg style="left:1149.5px;top:656.1px" width="7" height="5" viewBox="0 0 7 5"><path d="M0.300 .5h6.4L3.500 4.300z" fill="#6b7885"/></svg>
<div style="left:1173.3px;top:585.6px;width:105.5px;height:20px;background:#485563;border-radius:3.5px;"></div>
<div class="t" style="left:1188.80px;top:589.10px;height:16px;line-height:16px;font-size:12px;color:#e9edf1;white-space:pre;letter-spacing:-0.255px;">Save Tree</div>
<svg style="left:1266.5px;top:592.1px" width="7" height="5" viewBox="0 0 7 5"><path d="M0.300 .5h6.4L3.500 4.300z" fill="#6b7885"/></svg>
<div style="left:1173.3px;top:617.6px;width:105.5px;height:20px;background:#485563;border-radius:3.5px;"></div>
<div class="t" style="left:1187.80px;top:621.10px;height:16px;line-height:16px;font-size:12px;color:#e9edf1;white-space:pre;letter-spacing:-0.247px;">Clear Situation</div>
<div style="left:1290px;top:585.2px;width:63.8px;height:22.6px;border:1px solid #26313d;border-radius:4px;box-sizing:border-box;"></div>
<div style="left:1339.4px;top:586.2px;width:1px;height:20.6px;background:#26313d;"></div>
<div class="t" style="left:1294.70px;top:590.10px;height:16px;line-height:16px;font-size:12px;color:#636d77;white-space:pre;letter-spacing:-0.503px;">Cash</div>
<svg style="left:1342.6px;top:593.0px" width="8" height="5" viewBox="0 0 8 5"><path d="M0.5 0.5h7L4 4.5z" fill="#2a3642"/></svg>
<div style="left:1364.7px;top:585.2px;width:74.2px;height:20.8px;border:1px solid #26313d;border-radius:3px;box-sizing:border-box;"></div>
<div class="t" style="left:1384.10px;top:589.20px;height:16px;line-height:16px;font-size:12px;color:#636d77;white-space:pre;letter-spacing:-0.502px;">Stacks</div>
<div class="t" style="left:1289.70px;top:621.00px;height:16px;line-height:16px;font-size:12px;color:#e6ebf0;white-space:pre;letter-spacing:-0.547px;">Who is OOP:</div>
<div style="left:1365.5px;top:617.2px;width:73.4px;height:22.6px;border:1px solid #26313d;border-radius:4px;box-sizing:border-box;"></div>
<div style="left:1424.8px;top:618.2px;width:1px;height:20.6px;background:#26313d;"></div>
<div class="t" style="left:1369.40px;top:622.10px;height:16px;line-height:16px;font-size:12px;color:#636d77;white-space:pre;letter-spacing:-0.190px;">Player 1</div>
<svg style="left:1427.9px;top:625.0px" width="8" height="5" viewBox="0 0 8 5"><path d="M0.5 0.5h7L4 4.5z" fill="#2a3642"/></svg>
<div class="t" style="left:349.40px;top:706.30px;height:16px;line-height:16px;font-size:12px;color:#e6ebf0;white-space:pre;letter-spacing:-0.337px;">Range Player1</div>
<div style="left:478.9px;top:703.3px;width:105.5px;height:19.8px;background:#485563;border-radius:3.5px;"></div>
<div class="t" style="left:501.25px;top:706.10px;height:16px;line-height:16px;font-size:12px;color:#e9edf1;white-space:pre;">56.36%</div>
<svg style="left:572.8px;top:709.7px" width="7" height="5" viewBox="0 0 7 5"><path d="M0.300 .5h6.4L3.500 4.300z" fill="#6b7885"/></svg>
<div class="t" style="left:349.40px;top:738.30px;height:16px;line-height:16px;font-size:12px;color:#e6ebf0;white-space:pre;letter-spacing:-0.337px;">Range Player2</div>
<div style="left:478.9px;top:735.3px;width:105.5px;height:19.8px;background:#485563;border-radius:3.5px;"></div>
<div class="t" style="left:501.25px;top:738.10px;height:16px;line-height:16px;font-size:12px;color:#e9edf1;white-space:pre;">29.41%</div>
<svg style="left:572.8px;top:741.7px" width="7" height="5" viewBox="0 0 7 5"><path d="M0.300 .5h6.4L3.500 4.300z" fill="#6b7885"/></svg>
<div class="t" style="left:349.40px;top:770.30px;height:16px;line-height:16px;font-size:12px;color:#e6ebf0;white-space:pre;letter-spacing:-0.337px;">Range Player3</div>
<div style="left:478.9px;top:767.3px;width:105.5px;height:19.8px;background:#485563;border-radius:3.5px;"></div>
<div class="t" style="left:504.59px;top:770.10px;height:16px;line-height:16px;font-size:12px;color:#e9edf1;white-space:pre;">9.86%</div>
<svg style="left:572.8px;top:773.7px" width="7" height="5" viewBox="0 0 7 5"><path d="M0.300 .5h6.4L3.500 4.300z" fill="#6b7885"/></svg>
<div style="left:596.4px;top:703.3px;width:148.3px;height:19.8px;background:#485563;border-radius:3.5px;"></div>
<div class="t" style="left:633.25px;top:706.10px;height:16px;line-height:16px;font-size:12px;color:#e9edf1;white-space:pre;letter-spacing:-0.336px;">Calculate Flop</div>
<div style="left:596.4px;top:735.3px;width:148.3px;height:19.8px;background:#485563;border-radius:3.5px;"></div>
<div class="t" style="left:648.50px;top:738.10px;height:16px;line-height:16px;font-size:12px;color:#e9edf1;white-space:pre;letter-spacing:-0.362px;">Add Job</div>
<div class="t" style="left:765.70px;top:706.80px;height:16px;line-height:16px;font-size:12px;color:#59646f;white-space:pre;letter-spacing:-0.299px;">Range Player1</div>
<div style="left:895.2px;top:703px;width:106px;height:20.6px;border:1px solid #232e39;border-radius:3.5px;box-sizing:border-box;"></div>
<div class="t" style="left:919.85px;top:706.80px;height:16px;line-height:16px;font-size:12px;color:#636d77;white-space:pre;letter-spacing:0.335px;">0.00%</div>
<svg style="left:989.0px;top:710.3px" width="8" height="5" viewBox="0 0 8 5"><path d="M0.300 .5h7.4L4 4.500z" fill="#6f7b87"/></svg>
<div class="t" style="left:765.70px;top:738.80px;height:16px;line-height:16px;font-size:12px;color:#59646f;white-space:pre;letter-spacing:-0.299px;">Range Player2</div>
<div style="left:895.2px;top:735px;width:106px;height:20.6px;border:1px solid #232e39;border-radius:3.5px;box-sizing:border-box;"></div>
<div class="t" style="left:919.85px;top:738.80px;height:16px;line-height:16px;font-size:12px;color:#636d77;white-space:pre;letter-spacing:0.335px;">0.00%</div>
<svg style="left:989.0px;top:742.3px" width="8" height="5" viewBox="0 0 8 5"><path d="M0.300 .5h7.4L4 4.500z" fill="#6f7b87"/></svg>
<div class="t" style="left:765.70px;top:770.80px;height:16px;line-height:16px;font-size:12px;color:#59646f;white-space:pre;letter-spacing:-0.299px;">Range Player3</div>
<div style="left:895.2px;top:767px;width:106px;height:20.6px;border:1px solid #232e39;border-radius:3.5px;box-sizing:border-box;"></div>
<div class="t" style="left:919.85px;top:770.80px;height:16px;line-height:16px;font-size:12px;color:#636d77;white-space:pre;letter-spacing:0.335px;">0.00%</div>
<svg style="left:989.0px;top:774.3px" width="8" height="5" viewBox="0 0 8 5"><path d="M0.300 .5h7.4L4 4.500z" fill="#6f7b87"/></svg>
<div style="left:1012.5px;top:703px;width:149px;height:20.6px;border:1px solid #232e39;border-radius:3.5px;box-sizing:border-box;"></div>
<div class="t" style="left:1049.00px;top:706.80px;height:16px;line-height:16px;font-size:12px;color:#636d77;white-space:pre;letter-spacing:-0.241px;">Calculate Turn</div>
<div style="left:1012.5px;top:735px;width:74.5px;height:20.6px;border:1px solid #232e39;border-radius:3.5px;box-sizing:border-box;"></div>
<div class="t" style="left:1017.50px;top:738.80px;height:16px;line-height:16px;font-size:12px;color:#636d77;white-space:pre;letter-spacing:-0.199px;">Runouts</div>
<svg style="left:1074.2px;top:742.3px" width="8" height="5" viewBox="0 0 8 5"><path d="M0.300 .5h7.4L4 4.500z" fill="#6f7b87"/></svg>
<div class="t" style="left:1182.40px;top:706.80px;height:16px;line-height:16px;font-size:12px;color:#59646f;white-space:pre;letter-spacing:-0.299px;">Range Player1</div>
<div style="left:1311.9px;top:703px;width:106px;height:20.6px;border:1px solid #232e39;border-radius:3.5px;box-sizing:border-box;"></div>
<div class="t" style="left:1336.55px;top:706.80px;height:16px;line-height:16px;font-size:12px;color:#636d77;white-space:pre;letter-spacing:0.335px;">0.00%</div>
<svg style="left:1405.7px;top:710.3px" width="8" height="5" viewBox="0 0 8 5"><path d="M0.300 .5h7.4L4 4.500z" fill="#6f7b87"/></svg>
<div class="t" style="left:1182.40px;top:738.80px;height:16px;line-height:16px;font-size:12px;color:#59646f;white-space:pre;letter-spacing:-0.299px;">Range Player2</div>
<div style="left:1311.9px;top:735px;width:106px;height:20.6px;border:1px solid #232e39;border-radius:3.5px;box-sizing:border-box;"></div>
<div class="t" style="left:1336.55px;top:738.80px;height:16px;line-height:16px;font-size:12px;color:#636d77;white-space:pre;letter-spacing:0.335px;">0.00%</div>
<svg style="left:1405.7px;top:742.3px" width="8" height="5" viewBox="0 0 8 5"><path d="M0.300 .5h7.4L4 4.500z" fill="#6f7b87"/></svg>
<div class="t" style="left:1182.40px;top:770.80px;height:16px;line-height:16px;font-size:12px;color:#59646f;white-space:pre;letter-spacing:-0.299px;">Range Player3</div>
<div style="left:1311.9px;top:767px;width:106px;height:20.6px;border:1px solid #232e39;border-radius:3.5px;box-sizing:border-box;"></div>
<div class="t" style="left:1336.55px;top:770.80px;height:16px;line-height:16px;font-size:12px;color:#636d77;white-space:pre;letter-spacing:0.335px;">0.00%</div>
<svg style="left:1405.7px;top:774.3px" width="8" height="5" viewBox="0 0 8 5"><path d="M0.300 .5h7.4L4 4.500z" fill="#6f7b87"/></svg>
<div style="left:1429.2px;top:703px;width:149px;height:20.6px;border:1px solid #232e39;border-radius:3.5px;box-sizing:border-box;"></div>
<div class="t" style="left:1465.35px;top:706.80px;height:16px;line-height:16px;font-size:12px;color:#636d77;white-space:pre;letter-spacing:-0.338px;">Calculate River</div>
<div style="left:1429.2px;top:735px;width:74.5px;height:20.6px;border:1px solid #232e39;border-radius:3.5px;box-sizing:border-box;"></div>
<div class="t" style="left:1434.20px;top:738.80px;height:16px;line-height:16px;font-size:12px;color:#636d77;white-space:pre;letter-spacing:-0.199px;">Runouts</div>
<svg style="left:1490.9px;top:742.3px" width="8" height="5" viewBox="0 0 8 5"><path d="M0.300 .5h7.4L4 4.500z" fill="#6f7b87"/></svg>
<div style="left:350.7px;top:799.5px;width:394.5px;height:255px;border:1px solid #26313d;border-radius:3px;box-sizing:border-box;"></div>
<div style="left:353.2px;top:801.8px;width:389.5px;height:26.5px;background:linear-gradient(90deg,#1f2d3a,#2a3843);"></div>
<div class="t" style="left:360.00px;top:807.90px;height:16px;line-height:16px;font-size:12px;color:#e6ebf0;white-space:pre;letter-spacing:-0.256px;">Flop Actions</div>
<div style="left:766.7px;top:799.5px;width:394.5px;height:255px;border:1px solid #26313d;border-radius:3px;box-sizing:border-box;"></div>
<div style="left:771.5px;top:803.3px;width:384.9px;height:22.8px;background:linear-gradient(90deg,#222f3b,#2c3a45);"></div>
<div class="t" style="left:776.70px;top:807.90px;height:16px;line-height:16px;font-size:12px;color:#55616d;white-space:pre;letter-spacing:-0.246px;">Turn Actions</div>
<div style="left:1183px;top:799.5px;width:394.8px;height:255px;border:1px solid #26313d;border-radius:3px;box-sizing:border-box;"></div>
<div style="left:1187.8px;top:803.3px;width:385.2px;height:22.8px;background:linear-gradient(90deg,#222f3b,#2c3a45);"></div>
<div class="t" style="left:1193.00px;top:807.90px;height:16px;line-height:16px;font-size:12px;color:#55616d;white-space:pre;letter-spacing:-0.202px;">River Actions</div>
<svg style="left:360px;top:833px" width="9" height="6" viewBox="0 0 9 6"><path d="M0.500 .8h8L4.500 5.200z" fill="#4d5966"/></svg>
<div class="t" style="left:376.70px;top:829.40px;height:16px;line-height:16px;font-size:12px;color:#e6ebf0;white-space:pre;letter-spacing:-0.139px;">Flop 2s 4d 4h [Pot: 7.50] - Nash Dist. nan</div>
<svg style="left:383.5px;top:848.4px" width="5" height="9" viewBox="0 0 5 9"><path d="M0.800 .5v8L4.500 4.500z" fill="#4d5966"/></svg>
<div class="t" style="left:398.30px;top:845.40px;height:16px;line-height:16px;font-size:12px;color:#e6ebf0;white-space:pre;letter-spacing:-0.168px;">Player1 Check - 97.35%</div>
<svg style="left:383.5px;top:864.4px" width="5" height="9" viewBox="0 0 5 9"><path d="M0.800 .5v8L4.500 4.500z" fill="#4d5966"/></svg>
<div class="t" style="left:398.30px;top:861.40px;height:16px;line-height:16px;font-size:12px;color:#e6ebf0;white-space:pre;letter-spacing:-0.042px;">Player1 Bet 2.48 - 2.33%</div>
<svg style="left:383.5px;top:880.4px" width="5" height="9" viewBox="0 0 5 9"><path d="M0.800 .5v8L4.500 4.500z" fill="#4d5966"/></svg>
<div class="t" style="left:398.30px;top:877.40px;height:16px;line-height:16px;font-size:12px;color:#e6ebf0;white-space:pre;letter-spacing:-0.042px;">Player1 Bet 5.63 - 0.32%</div>
<svg style="left:1778px;top:1046px" width="142" height="34" viewBox="0 0 142 34">
<g fill="#2ad39a">
<path fill-rule="evenodd" d="M4 3.600h7.200c4.300 0 6.700 2.200 6.700 6 0 2.600-1.200 4.600-3.300 5.600 2.600 .9 4.100 3.100 4.100 6.200 0 4.800-2.900 8-7.400 8H4zM8.300 7.400v6.400h2.300c1.900 0 3-1.200 3-3.300 0-2.100-1.100-3.100-3-3.100zM8.300 17.500v8.100h2.700c2.100 0 3.300-1.500 3.300-4.100 0-2.600-1.300-4-3.400-4z"/>
<path fill-rule="evenodd" d="M20.700 3.600h7.200c4.300 0 6.700 2.200 6.700 6 0 2.600-1.200 4.600-3.300 5.600 2.600 .9 4.100 3.100 4.100 6.200 0 4.800-2.900 8-7.400 8h-7.300zM25 7.400v6.400h2.300c1.900 0 3-1.200 3-3.300 0-2.100-1.100-3.100-3-3.100zM25 17.500v8.100h2.700c2.100 0 3.300-1.500 3.300-4.100 0-2.600-1.300-4-3.400-4z"/>
<path d="M35.600 3.600h12.200v3.600l-7.600 18.200h7.700v4H35.100v-3.600l7.600-18.200h-7.100z"/>
</g>
<g fill="#ffffff">
<path fill-rule="evenodd" d="M49.500 3.600h7c4.700 0 7.200 3 7.200 8 0 5.100-2.700 8.200-7.400 8.200h-2.400v9.600h-4.400zM53.900 7.500v8.400h2c2.200 0 3.300-1.500 3.300-4.300 0-2.700-1.100-4.100-3.300-4.100z"/>
<path d="M92 3.600h4.400v10.700l5.500-10.700h4.800l-5.800 10.600 6.400 15.200h-4.800l-4.400-11-1.700 3v8H92z"/>
<path d="M108.700 3.600h12.600v4h-8.200v6.500h7.300v3.900h-7.300v7.400h8.400v4h-12.800z"/>
<path fill-rule="evenodd" d="M123.700 3.600h7.200c4.600 0 7 2.700 7 7.300 0 3.300-1.300 5.700-3.700 6.800l4.300 11.700h-4.700l-3.600-10.700h-2.100v10.700h-4.400zM128.100 7.500v7.500h2.300c2.100 0 3.100-1.300 3.100-3.800 0-2.500-1-3.700-3.100-3.700z"/>
</g>
<circle cx="77.400" cy="16" r="10.800" fill="none" stroke="#2ad39a" stroke-width="4.200"/>
<g stroke="#000" stroke-width="1.200"><path d="M77.400 2.500v5"/><path d="M65.800 22.800l4.200-2.500"/><path d="M89 22.800l-4.200-2.500"/></g>
</svg>
</body></html>
